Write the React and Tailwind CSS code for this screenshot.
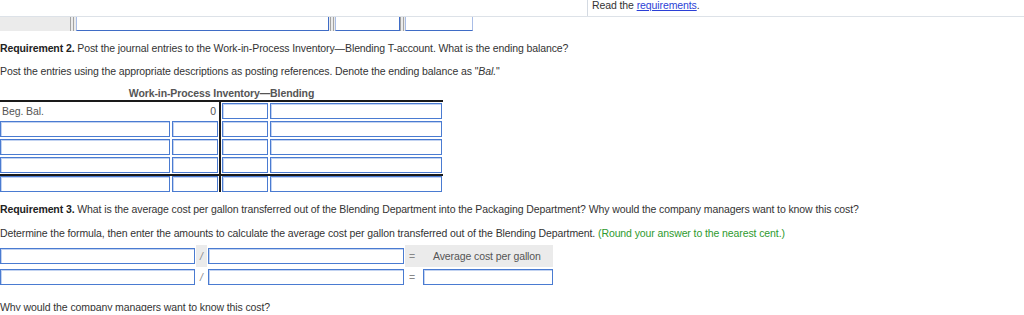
import React from "react";

const inp = "block h-[16px] bg-white border border-[#4a7bd1] shadow-[inset_1px_1px_0_0_#c3d3f1]";

function TRow({ left, last }) {
  return (
    <div className={"flex h-[18px] items-center " + (last ? "border-t-2 border-[#1a1a1a]" : "")}>
      <div className="flex w-[221px] h-full items-center border-r-2 border-[#1a1a1a]">
        {left ? (
          <div className="flex w-[219px] justify-between pl-[2px] pr-[3px] text-[#555]">
            <span>Beg. Bal.</span>
            <span>0</span>
          </div>
        ) : (
          <>
            <div className={inp + " w-[170px]"} />
            <div className={inp + " w-[46px] ml-[2px]"} />
          </>
        )}
      </div>
      <div className={inp + " w-[46px] ml-[1px]"} />
      <div className={inp + " w-[172px] ml-[2px]"} />
    </div>
  );
}

export default function App() {
  return (
    <div
      className="w-[1024px] h-[315px] overflow-hidden bg-white text-[10.5px] leading-[14px] tracking-[-0.1px] text-[#333]"
      style={{ fontFamily: '"Liberation Sans", Arial, sans-serif' }}
    >
      {/* top bar */}
      <div className="flex h-[17px] border-b border-[#dde2e8]">
        <div className="w-[587px]" />
        <div className="border-l border-[#d4dae2] pl-[4px]">
          <div className="-mt-[2px] text-[#333]">
            Read the <span className="text-[#2b3fd6] underline">requirements</span>.
          </div>
        </div>
      </div>
      {/* gray strip */}
      <div className="flex h-[14px] w-[473px] bg-[#ebebeb]">
        <div className="w-[70px]" />
        <div className="w-[4px] border-x border-[#a3a3a3]" />
        <div className="ml-[2px] w-[253px] bg-white border-l border-[#a9bde6] border-r border-b border-r-[#3f6cc6] border-b-[#3f6cc6]" />
        <div className="ml-[1px] w-[4px] border-x border-[#a3a3a3]" />
        <div className="ml-[1px] w-[65px] bg-white border-l border-[#a9bde6] border-r border-b border-r-[#3f6cc6] border-b-[#3f6cc6]" />
        <div className="w-[4px] border-x border-[#a3a3a3]" />
        <div className="ml-[1px] w-[68px] bg-white border-l border-[#a9bde6] border-r border-b border-r-[#a9bde6] border-b-[#3f6cc6]" />
      </div>

      {/* Requirement 2 */}
      <p className="mt-[10px] whitespace-nowrap">
        <span className="font-bold text-[#222]">Requirement 2.</span> Post the journal entries to the Work-in-Process Inventory—Blending T-account. What is the ending balance?
      </p>
      <p className="mt-[9px] whitespace-nowrap">
        Post the entries using the appropriate descriptions as posting references. Denote the ending balance as "<i>Bal.</i>"
      </p>
      <div className="mt-[8px] w-[443px] text-center font-bold text-[#555]">
        Work-in-Process Inventory—Blending
      </div>
      <div className="w-[443px] border-t-2 border-[#1a1a1a]">
        <TRow left />
        <TRow />
        <TRow />
        <TRow />
        <TRow last />
      </div>

      {/* Requirement 3 */}
      <p className="mt-[10px] whitespace-nowrap">
        <span className="font-bold text-[#222]">Requirement 3.</span> What is the average cost per gallon transferred out of the Blending Department into the Packaging Department? Why would the company managers want to know this cost?
      </p>
      <p className="mt-[10px] whitespace-nowrap">
        Determine the formula, then enter the amounts to calculate the average cost per gallon transferred out of the Blending Department.{" "}
        <span className="text-[#2e9a2e]">(Round your answer to the nearest cent.)</span>
      </p>
      <div className="mt-[5px] grid w-[553px] grid-cols-[196px_11px_198px_14px_134px]">
        {/* row 1 */}
        <div className="flex h-[22px] items-center">
          <div className={inp + " w-[195px]"} />
        </div>
        <div className="flex h-[22px] items-center justify-center bg-[#ebebeb] text-[#888] italic">/</div>
        <div className="flex h-[22px] items-center pl-[1px]">
          <div className={inp + " w-[196px]"} />
        </div>
        <div className="flex h-[22px] items-center justify-center bg-[#ebebeb] text-[#888]">=</div>
        <div className="flex h-[22px] items-center bg-[#ebebeb] pl-[14px] text-[#555]">Average cost per gallon</div>
        {/* row 2 */}
        <div className="flex h-[20px] items-center">
          <div className={inp + " w-[195px]"} />
        </div>
        <div className="flex h-[20px] items-center justify-center text-[#888] italic">/</div>
        <div className="flex h-[20px] items-center pl-[1px]">
          <div className={inp + " w-[196px]"} />
        </div>
        <div className="flex h-[20px] items-center justify-center text-[#888]">=</div>
        <div className="flex h-[20px] items-center pl-[4px]">
          <div className={inp + " w-[130px]"} />
        </div>
      </div>
      <p className="mt-[13px] h-[11px] overflow-hidden whitespace-nowrap">
        Why would the company managers want to know this cost?
      </p>
    </div>
  );
}
